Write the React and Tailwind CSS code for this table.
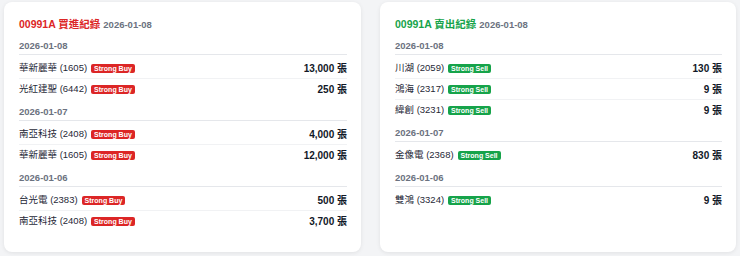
import React from "react";

const buy = [
  {
    date: "2026-01-08",
    rows: [
      ["華新麗華 (1605)", "13,000 張"],
      ["光紅建聖 (6442)", "250 張"],
    ],
  },
  {
    date: "2026-01-07",
    rows: [
      ["南亞科技 (2408)", "4,000 張"],
      ["華新麗華 (1605)", "12,000 張"],
    ],
  },
  {
    date: "2026-01-06",
    rows: [
      ["台光電 (2383)", "500 張"],
      ["南亞科技 (2408)", "3,700 張"],
    ],
  },
];

const sell = [
  {
    date: "2026-01-08",
    rows: [
      ["川湖 (2059)", "130 張"],
      ["鴻海 (2317)", "9 張"],
      ["緯創 (3231)", "9 張"],
    ],
  },
  {
    date: "2026-01-07",
    rows: [["金像電 (2368)", "830 張"]],
  },
  {
    date: "2026-01-06",
    rows: [["雙鴻 (3324)", "9 張"]],
  },
];

function Card({ title, titleClass, badge, badgeClass, groups }) {
  return (
    <div className="bg-white rounded-lg shadow-[0_1px_4px_rgba(0,0,0,0.08)] pt-[13px] pb-[20px] pl-[15px] pr-[14px]">
      <div className="flex items-baseline gap-[3px] leading-[18px] mb-[4px]">
        <span className={`text-[10.5px] font-bold ${titleClass}`}>{title}</span>
        <span className="text-[9.5px] font-semibold text-[#6b7280]">2026-01-08</span>
      </div>
      {groups.map((g, i) => (
        <div key={g.date} className={i === 0 ? "" : "mt-[4px]"}>
          <div className="text-[9.5px] leading-[16px] font-semibold text-[#6b7280] border-b border-[#e5e7eb]">
            {g.date}
          </div>
          <div className="mt-[3px]">
            {g.rows.map((r, j) => (
              <div
                key={j}
                className={`h-[21px] flex items-center justify-between ${
                  j < g.rows.length - 1 ? "border-b border-[#f1f2f4]" : ""
                }`}
              >
                <div className="flex items-center gap-[4px]">
                  <span className="text-[9.5px] text-[#1f2937]">{r[0]}</span>
                  <span
                    className={`text-[7px] leading-[9px] font-bold text-white px-[3px] rounded-[2px] ${badgeClass}`}
                  >
                    {badge}
                  </span>
                </div>
                <span className="text-[10px] font-bold text-[#111827]">{r[1]}</span>
              </div>
            ))}
          </div>
        </div>
      ))}
    </div>
  );
}

export default function App() {
  return (
    <div className="w-[740px] h-[256px] bg-[#f3f4f6] overflow-hidden font-['Liberation_Sans','Noto_Sans_CJK_TC',sans-serif]">
      <div className="grid grid-cols-[357px_356px] gap-[19px] pl-[4px] pt-[2px]">
        <Card
          title="00991A 買進紀錄"
          titleClass="text-[#dc2626]"
          badge="Strong Buy"
          badgeClass="bg-[#dc2626]"
          groups={buy}
        />
        <Card
          title="00991A 賣出紀錄"
          titleClass="text-[#16a34a]"
          badge="Strong Sell"
          badgeClass="bg-[#16a34a]"
          groups={sell}
        />
      </div>
    </div>
  );
}
